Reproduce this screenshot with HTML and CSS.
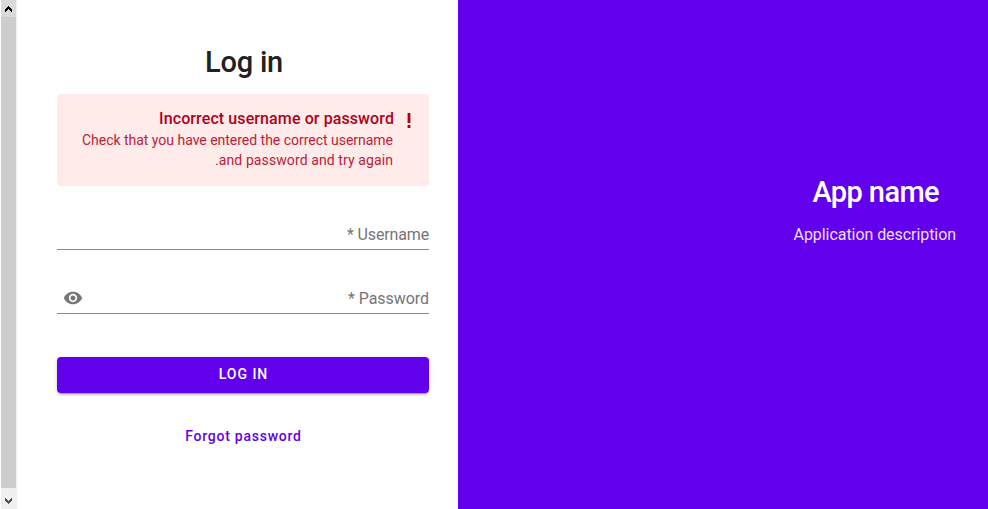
FILE: index.html
```html
<!DOCTYPE html>
<html lang="en">
<head>
<meta charset="utf-8">
<title>Log in</title>
<link rel="stylesheet" href="styles.css">
</head>
<body>
<div class="page">
  <div class="scrollbar">
    <span class="scroll-btn scroll-btn-up"><svg width="7" height="6" viewBox="0 0 7 6" shape-rendering="crispEdges"><path fill="#000" d="M3 0h1v1h1v1h1v1h1v3h-1v-1h-1v-1h-1v-1h-1v1h-1v1h-1v1h-1v-3h1v-1h1v-1h1z"/></svg></span>
    <span class="scroll-thumb"></span>
    <span class="scroll-btn scroll-btn-down"><svg width="7" height="6" viewBox="0 0 7 6" shape-rendering="crispEdges"><path fill="#505050" d="M0 0h1v1h1v1h1v1h1v-1h1v-1h1v-1h1v3h-1v1h-1v1h-1v1h-1v-1h-1v-1h-1v-1h-1z"/></svg></span>
  </div>
  <main class="login">
    <h1 class="title">Log in</h1>
    <section class="alert">
      <span class="alert-icon"><svg width="4" height="15" viewBox="0 0 4 15"><path fill="#b00020" d="M.6 0h2.800v10H.6zM.6 12h2.800v3H.6z"/></svg></span>
      <div class="alert-text">
        <h2 class="alert-title">Incorrect username or password</h2>
        <p class="alert-body">Check that you have entered the correct username <span class="alert-last">and password and try again.</span></p>
      </div>
    </section>
    <label class="field"><span class="username" dir="ltr">* Username</span></label>
    <label class="field"><span class="password" dir="ltr">* Password</span>
      <svg class="eye" width="20" height="20" viewBox="0 0 24 24"><path fill="#757575" d="M12 4.500C7 4.500 2.730 7.610 1 12c1.730 4.390 6 7.500 11 7.500s9.270-3.110 11-7.500c-1.730-4.390-6-7.500-11-7.500zM12 17c-2.760 0-5-2.240-5-5s2.240-5 5-5 5 2.240 5 5-2.240 5-5 5zm0-8c-1.660 0-3 1.340-3 3s1.340 3 3 3 3-1.340 3-3-1.340-3-3-3z"/></svg>
    </label>
    <button class="submit" type="button">LOG IN</button>
    <a class="forgot">Forgot password</a>
  </main>
  <aside class="brand">
    <div class="brand-inner">
      <h1 class="brand-name">App name</h1>
      <p class="brand-description">Application description</p>
    </div>
  </aside>
</div>
</body>
</html>
```

FILE: styles.css
```css
* { box-sizing: border-box; }
body {
  margin: 0;
  font-family: Roboto, "Liberation Sans", sans-serif;
  color: #212121;
  background: #fff;
}
h1, h2, p { margin: 0; }
svg { display: block; }
.page { display: flex; height: 509px; overflow: hidden; }
.scrollbar {
  width: 17px;
  padding-left: 1px;
  display: flex;
  flex-direction: column;
  background: linear-gradient(90deg, #fff 1px, #f0f0f0 1px);
}
.scroll-btn {
  height: 21px;
  display: flex;
  align-items: center;
  justify-content: center;
}
.scroll-btn-up { height: 17px; margin-right: 1px; background: #dadada; }
.scroll-btn-down { padding: 4px 2px 0 0; }
.scroll-thumb { flex: 1; margin-right: 1px; background: #cdcdcd; }
.login {
  width: 441px;
  padding: 44px 29px 0 40px;
  display: flex;
  flex-direction: column;
  direction: rtl;
}
.title {
  padding-left: 2px;
  font-size: 29px;
  font-weight: 500;
  line-height: 36px;
  letter-spacing: -.2px;
  text-align: center;
}
.alert {
  display: flex;
  gap: 13px;
  height: 92px;
  margin-top: 14px;
  padding: 14px 18px 0 16px;
  border-radius: 4px;
  background: #ffebe9;
  color: #b00020;
}
.alert-icon { padding-top: 5px; }
.alert-text { flex: 1; }
.alert-title { font-size: 16px; font-weight: 500; line-height: 22px; letter-spacing: .1px; }
.alert-body { padding-right: 1px; font-size: 14px; line-height: 20px; letter-spacing: -.02px; opacity: .87; }
.alert-last { letter-spacing: .1px; }
.field {
  display: flex;
  justify-content: space-between;
  height: 64px;
  padding-top: 37px;
  border-bottom: 1px solid #8c8c8c;
  font-size: 16px;
  line-height: 24px;
  color: #757575;
}
.username { letter-spacing: -.15px; }
.password { letter-spacing: -.05px; }
.eye { margin: 1px 0 0 6px; }
.submit {
  height: 36px;
  margin-top: 43px;
  border: 0;
  padding: 0 0 3px 1px;
  border-radius: 4px;
  background: #6200ee;
  box-shadow: 0 3px 1px -2px rgba(0,0,0,.2), 0 2px 2px rgba(0,0,0,.14), 0 1px 5px rgba(0,0,0,.12);
  color: #fff;
  font: 500 14px/20px Roboto, sans-serif;
  letter-spacing: .95px;
}
.forgot {
  margin-top: 33px;
  padding-left: 1px;
  color: #6200ee;
  font-size: 14px;
  font-weight: 500;
  line-height: 20px;
  letter-spacing: .75px;
  text-align: center;
}
.brand {
  flex: 1;
  display: flex;
  justify-content: flex-end;
  padding: 174px 32px 0 0;
  background: #6200ee;
  color: #fff;
}
.brand-inner { text-align: center; }
.brand-name { padding-left: 2px; font-size: 29px; font-weight: 500; line-height: 36px; letter-spacing: -.6px; }
.brand-description { margin-top: 13px; font-size: 16px; line-height: 24px; letter-spacing: -.06px; opacity: .87; }
```
